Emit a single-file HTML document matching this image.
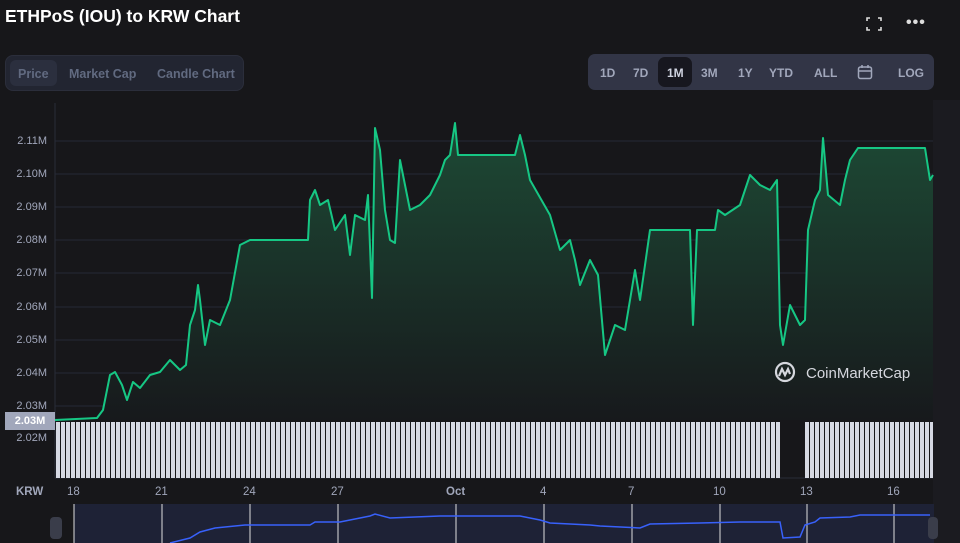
<!DOCTYPE html><html><head><style>
body{margin:0;width:960px;height:543px;background:#17171a;font-family:"Liberation Sans",sans-serif;overflow:hidden;position:relative;color:#a1a7bb}
.t{position:absolute;left:5px;top:6px;font-size:17.5px;font-weight:bold;color:#fff}
.tabs{position:absolute;left:5px;top:55px;width:239px;height:36px;border:1px solid #2b2e3b;border-radius:8px;background:#222531;box-sizing:border-box}
.tabs span{position:absolute;top:11px;font-size:12.5px;font-weight:bold;color:#616a80}
.pr{position:absolute;left:4px;top:4px;width:47px;height:26px;background:#2b2f3e;border-radius:6px}
.rng{position:absolute;left:588px;top:54px;width:346px;height:36px;background:#323546;border-radius:7px}
.rng span{position:absolute;top:12px;font-size:12px;font-weight:bold;color:#a1a7bb}
.sel{position:absolute;left:70px;top:3px;width:34px;height:30px;background:#17171f;border-radius:7px}
.yl{position:absolute;right:913px;font-size:11px;color:#a1a7bb;text-align:right}
.xl{position:absolute;top:486px;font-size:11.5px;color:#a1a7bb}
.vol{position:absolute;top:422px;height:56px;background:repeating-linear-gradient(90deg,#d6d9e3 0px,#d6d9e3 4px,#17171a 4px,#17171a 5px)}
</style></head><body>
<div class="t">ETHPoS (IOU) to KRW Chart</div>
<svg style="position:absolute;left:866px;top:17px" width="16" height="14" fill="none" stroke="#ddd" stroke-width="1.6"><path d="M1 4V1H4M12 1H15V4M15 10V13H12M4 13H1V10"/></svg>
<div style="position:absolute;left:906px;top:14px;color:#ddd;font-size:16px;font-weight:bold;letter-spacing:1px">•••</div>
<div class="tabs"><div class="pr"></div><span style="left:12px">Price</span><span style="left:63px">Market Cap</span><span style="left:151px">Candle Chart</span></div>
<div class="rng"><div class="sel"></div>
<span style="left:12px">1D</span><span style="left:45px">7D</span><span style="left:79px;color:#cfd3e0">1M</span><span style="left:113px">3M</span><span style="left:150px">1Y</span><span style="left:181px">YTD</span><span style="left:226px">ALL</span>
<svg style="position:absolute;left:269px;top:10px" width="16" height="16" fill="none" stroke="#a1a7bb" stroke-width="1.5"><rect x="1.5" y="3" width="13" height="11.5" rx="2"/><path d="M1.5 7H14.5M5 1V4M11 1V4"/></svg>
<span style="left:310px">LOG</span></div>
<div style="position:absolute;left:933px;top:100px;width:27px;height:443px;background:#1b1b20"></div>
<svg style="position:absolute;left:0;top:0" width="960" height="543">
<defs><linearGradient id="g" x1="0" y1="0" x2="0" y2="1"><stop offset="0" stop-color="#1d4a35"/><stop offset="1" stop-color="#17191c"/></linearGradient></defs>
<line x1="55" y1="103" x2="55" y2="478" stroke="#2a2d38"/>
<g stroke="#262a36"><line x1="55" y1="141" x2="933" y2="141"/><line x1="55" y1="174" x2="933" y2="174"/><line x1="55" y1="207" x2="933" y2="207"/><line x1="55" y1="240" x2="933" y2="240"/><line x1="55" y1="273" x2="933" y2="273"/><line x1="55" y1="307" x2="933" y2="307"/><line x1="55" y1="340" x2="933" y2="340"/><line x1="55" y1="373" x2="933" y2="373"/><line x1="55" y1="406" x2="933" y2="406"/></g>
<path d="M55 420L97 418L103 410L110 375L115 372L122 385L127 400L133 382L140 388L150 375L160 372L170 360L180 370L186 365L190 325L195 310L198 285L200 300L205 345L210 320L220 325L230 300L240 245L250 240L308 240L310 200L315 190L320 205L328 200L335 230L345 215L350 255L355 215L365 220L368 195L372 298L375 128L380 150L385 210L390 240L395 243L400 160L405 185L410 210L420 205L430 195L440 175L445 160L450 155L455 123L458 155L515 155L520 135L525 155L530 180L550 215L560 250L570 240L575 260L580 285L590 260L598 275L605 355L615 325L625 330L635 270L640 300L650 230L690 230L693 325L697 230L715 230L718 210L725 215L740 205L750 175L760 185L770 190L777 180L780 325L783 345L790 305L800 325L805 320L808 230L815 200L820 190L823 138L828 195L840 205L845 180L850 160L858 148L925 148L930 180L933 175L933 420L55 420Z" fill="url(#g)"/>
<path d="M55 420L97 418L103 410L110 375L115 372L122 385L127 400L133 382L140 388L150 375L160 372L170 360L180 370L186 365L190 325L195 310L198 285L200 300L205 345L210 320L220 325L230 300L240 245L250 240L308 240L310 200L315 190L320 205L328 200L335 230L345 215L350 255L355 215L365 220L368 195L372 298L375 128L380 150L385 210L390 240L395 243L400 160L405 185L410 210L420 205L430 195L440 175L445 160L450 155L455 123L458 155L515 155L520 135L525 155L530 180L550 215L560 250L570 240L575 260L580 285L590 260L598 275L605 355L615 325L625 330L635 270L640 300L650 230L690 230L693 325L697 230L715 230L718 210L725 215L740 205L750 175L760 185L770 190L777 180L780 325L783 345L790 305L800 325L805 320L808 230L815 200L820 190L823 138L828 195L840 205L845 180L850 160L858 148L925 148L930 180L933 175" fill="none" stroke="#16c784" stroke-width="2" stroke-linejoin="round"/>
<line x1="55" y1="478" x2="933" y2="478" stroke="#2a2d38"/>
<rect x="74" y="504" width="860" height="39" fill="#1e2236"/>
<g stroke="#ddd" stroke-width="1"><line x1="74" y1="504" x2="74" y2="543"/><line x1="162" y1="504" x2="162" y2="543"/><line x1="250" y1="504" x2="250" y2="543"/><line x1="338" y1="504" x2="338" y2="543"/><line x1="456" y1="504" x2="456" y2="543"/><line x1="544" y1="504" x2="544" y2="543"/><line x1="632" y1="504" x2="632" y2="543"/><line x1="720" y1="504" x2="720" y2="543"/><line x1="807" y1="504" x2="807" y2="543"/><line x1="894" y1="504" x2="894" y2="543"/></g>
<path d="M170 543L190 538L200 532L215 528L245 525L310 525L315 522L340 522L370 516L375 514L390 518L440 516L450 516L520 516L540 520L550 523L590 525L600 526L640 528L650 524L700 523L740 522L780 522L783 538L800 537L805 525L815 522L820 518L850 517L860 515L930 515" fill="none" stroke="#3861fb" stroke-width="1.5"/>
<rect x="50" y="517" width="12" height="22" rx="4" fill="#3a3d4a"/><rect x="928" y="517" width="10" height="22" rx="4" fill="#3a3d4a"/>
<g transform="translate(775,362)" fill="none" stroke="#d5d7de" stroke-width="2.2"><circle cx="10" cy="10" r="9"/><path d="M4 14L7 7L10 13L13 7L15 12"/></g>
<text x="806" y="378" font-family="Liberation Sans" font-size="15" fill="#d5d7de">CoinMarketCap</text>
</svg>
<div class="vol" style="left:56px;width:724px"></div>
<div class="vol" style="left:805px;width:128px"></div>
<div class="yl" style="top:135px">2.11M</div><div class="yl" style="top:168px">2.10M</div><div class="yl" style="top:201px">2.09M</div><div class="yl" style="top:234px">2.08M</div><div class="yl" style="top:267px">2.07M</div><div class="yl" style="top:301px">2.06M</div><div class="yl" style="top:334px">2.05M</div><div class="yl" style="top:367px">2.04M</div><div class="yl" style="top:400px">2.03M</div><div class="yl" style="top:432px">2.02M</div>
<div style="position:absolute;left:5px;top:412px;width:50px;height:18px;background:#a1a7bb;color:#fff;font-size:11px;font-weight:bold;text-align:center;line-height:18px">2.03M</div>
<div class="xl" style="left:16px;font-weight:bold">KRW</div>
<div class="xl" style="left:67px">18</div><div class="xl" style="left:155px">21</div><div class="xl" style="left:243px">24</div><div class="xl" style="left:331px">27</div><div class="xl" style="left:446px;font-weight:bold">Oct</div><div class="xl" style="left:540px">4</div><div class="xl" style="left:628px">7</div><div class="xl" style="left:713px">10</div><div class="xl" style="left:800px">13</div><div class="xl" style="left:887px">16</div>
</body></html>
